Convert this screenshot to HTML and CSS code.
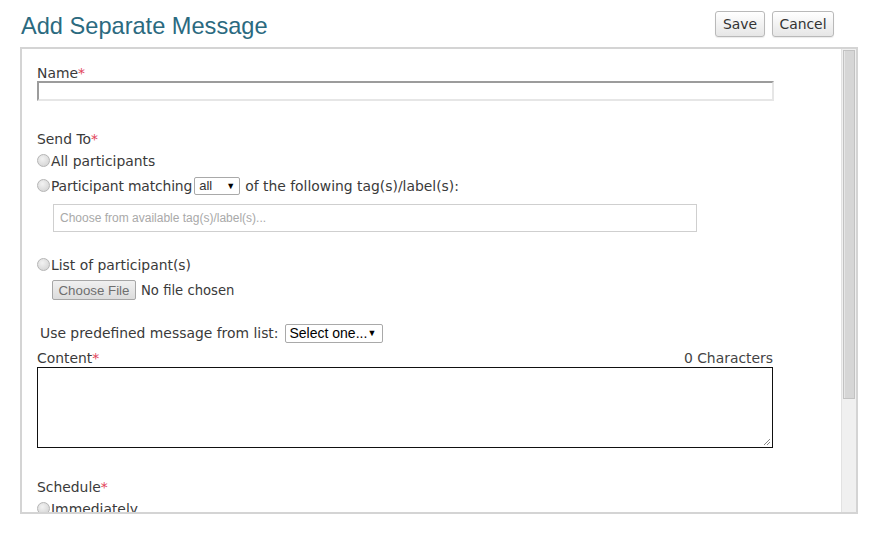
FILE: index.html
```html
<!DOCTYPE html>
<html>
<head>
<meta charset="utf-8">
<link rel="stylesheet" href="styles.css">
</head>
<body>
<div class="header">
  <h1 class="title">Add Separate Message</h1>
  <div class="actions">
    <button class="btn btn-save">Save</button>
    <button class="btn btn-cancel">Cancel</button>
  </div>
</div>
<div class="panel">
  <div class="content">
    <div class="form">
      <div class="label">Name<span class="req">*</span></div>
      <div class="text-input"></div>

      <div class="label label-send">Send To<span class="req">*</span></div>
      <div class="radio-row"><span class="radio"></span>All participants</div>
      <div class="radio-row"><span class="radio"></span><span class="tight">Participant matching</span><span class="select select-all"><span class="sel-text">all</span><span class="arrow">▼</span></span>of the following tag(s)/label(s):</div>
      <div class="tag-input">Choose from available tag(s)/label(s)...</div>

      <div class="radio-row radio-list"><span class="radio"></span>List of participant(s)</div>
      <div class="file-row"><span class="file-btn">Choose File</span><span class="file-text">No file chosen</span></div>

      <div class="predef-row">Use predefined message from list:<span class="select select-one"><span class="sel-text">Select one...</span><span class="arrow">▼</span></span></div>

      <div class="label label-row"><span>Content<span class="req">*</span></span><span class="count">0 Characters</span></div>
      <div class="textarea"><svg class="grip" width="8" height="8" viewBox="0 0 8 8"><path d="M7 1L1 7M7 4L4 7" stroke="#888" stroke-width="1"/></svg></div>

      <div class="label label-schedule">Schedule<span class="req">*</span></div>
      <div class="radio-row"><span class="radio"></span>Immediately</div>
    </div>
  </div>
  <div class="scrollbar"><div class="thumb"></div></div>
</div>
</body>
</html>
```
FILE: styles.css
```css
html, body {
  margin: 0;
  padding: 0;
  background: #fff;
}
body {
  font-family: "DejaVu Sans", Verdana, sans-serif;
  font-size: 13.9px;
  color: #3a3a3a;
  width: 877px;
  height: 558px;
  overflow: hidden;
}
.header {
  display: flex;
  justify-content: space-between;
  align-items: flex-start;
  height: 47px;
  padding: 0 43px 0 21px;
  box-sizing: border-box;
}
.title {
  margin: 12px 0 0 0;
  font-family: "Liberation Sans", Arial, sans-serif;
  font-weight: normal;
  font-size: 23.6px;
  line-height: 28px;
  color: #2b6a7f;
}
.actions {
  display: flex;
  gap: 7px;
  margin-top: 11px;
}
.btn {
  height: 26px;
  padding: 0;
  font-family: "DejaVu Sans", Verdana, sans-serif;
  font-size: 13.9px;
  color: #333;
  background: linear-gradient(#ffffff, #e6e6e6);
  border: 1px solid #b9b9b9;
  border-radius: 3px;
  box-shadow: 0 1px 1px rgba(0,0,0,0.08);
}
.btn-save {
  width: 50px;
}
.btn-cancel {
  width: 62px;
}
.panel {
  margin-left: 20px;
  width: 838px;
  height: 467px;
  border: 2px solid #d4d4d4;
  box-sizing: border-box;
  display: flex;
}
.content {
  flex: 1;
  overflow: hidden;
  padding: 14px 0 0 15px;
}
.form {
  width: 737px;
}
.label {
  line-height: 18px;
  height: 18px;
}
.label:first-child {
  margin-top: 1px;
  margin-bottom: -1px;
}
.req {
  color: #e2445a;
}
.text-input {
  height: 20px;
  box-sizing: border-box;
  border-top: 2px solid #9c9c9c;
  border-left: 2px solid #9c9c9c;
  border-bottom: 2px solid #e6e6e6;
  border-right: 2px solid #e6e6e6;
}
.label-send {
  margin-top: 29px;
  margin-bottom: -1px;
}
.radio-row {
  height: 25px;
  display: flex;
  align-items: center;
  white-space: nowrap;
}
.label-send + .radio-row {
  margin-top: 1px;
}
.tight {
  letter-spacing: -0.15px;
}
.radio {
  width: 11px;
  height: 11px;
  border-radius: 50%;
  border: 1px solid #b5b5b5;
  background: radial-gradient(circle at 40% 35%, #f2f2f2, #cfcfcf);
  margin-right: 1px;
  flex: none;
}
.select {
  display: inline-flex;
  align-items: center;
  justify-content: space-between;
  box-sizing: border-box;
  border: 1px solid #a9a9a9;
  background: #fff;
  font-family: "Liberation Sans", Arial, sans-serif;
  color: #000;
  border-radius: 2px;
  flex: none;
}
.select-all {
  width: 46px;
  height: 18px;
  margin: 0 5px 0 2px;
  padding: 0 4px 0 4px;
  font-size: 13px;
  color: #333;
}
.arrow {
  font-size: 9px;
  color: #000;
}
.tag-input {
  margin: 6px 0 0 16px;
  width: 644px;
  height: 28px;
  box-sizing: border-box;
  border: 1px solid #cfcfcf;
  font-family: "Liberation Sans", Arial, sans-serif;
  font-size: 12px;
  color: #a9a9a9;
  line-height: 26px;
  padding-left: 6px;
}
.radio-list {
  margin-top: 20px;
}
.file-row {
  margin: 3px 0 0 15px;
  height: 20px;
  display: flex;
  align-items: center;
}
.file-btn {
  width: 84px;
  height: 20px;
  box-sizing: border-box;
  border: 1px solid #a6a6a6;
  border-radius: 2px;
  background: linear-gradient(#f0f0f0, #dcdcdc);
  font-family: "Liberation Sans", Arial, sans-serif;
  font-size: 13.3px;
  color: #6f6f6f;
  display: flex;
  align-items: center;
  justify-content: center;
}
.file-text {
  margin-left: 5px;
  font-size: 13.2px;
}
.predef-row {
  margin: 23px 0 0 3px;
  height: 20px;
  display: flex;
  align-items: center;
  white-space: nowrap;
}
.select-one {
  width: 98px;
  height: 19px;
  margin-left: 6px;
  padding: 0 5px 0 4px;
  font-size: 14px;
}
.label-row {
  margin-top: 6px;
  display: flex;
  justify-content: space-between;
}
.count {
  color: #444;
  margin-right: 1px;
}
.textarea {
  width: 736px;
  height: 81px;
  box-sizing: border-box;
  border: 1px solid #111;
  display: flex;
  justify-content: flex-end;
  align-items: flex-end;
  padding: 0 1px 1px 0;
}
.grip {
  display: block;
}
.label-schedule {
  margin-top: 30px;
}
.scrollbar {
  width: 15px;
  flex: none;
  background: #f0f0f0;
  border-left: 1px solid #e2e2e2;
  padding: 1px 1px 0 1px;
  box-sizing: border-box;
}
.thumb {
  height: 349px;
  background: #d6d6d6;
  border: 1px solid #c2c2c2;
  box-sizing: border-box;
  box-shadow: inset 1px 0 0 #e6e6e6;
}
```
